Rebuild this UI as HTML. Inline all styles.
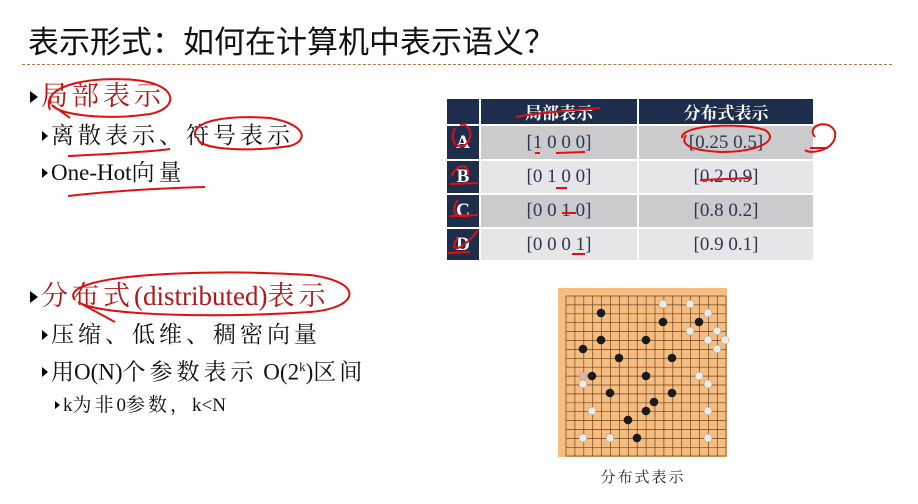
<!DOCTYPE html>
<html><head><meta charset="utf-8"><style>
body{margin:0;width:918px;height:504px;background:#fff;position:relative;overflow:hidden;font-family:"Liberation Serif","Noto Serif CJK SC",serif;}
.a{position:absolute;white-space:nowrap;line-height:1;}
.t{font-family:"Liberation Sans","Noto Sans CJK SC",sans-serif;font-size:31px;left:28px;top:27px;color:#111;}
.tri{display:inline-block;width:0;height:0;border-top:6px solid transparent;border-bottom:6px solid transparent;border-left:8px solid #000;margin-right:3px;vertical-align:middle;position:relative;top:-2px}
.tri.s{border-top-width:5px;border-bottom-width:5px;border-left-width:6px}
.l1{font-size:27px;color:#b01818}
.l2{font-size:23px;color:#111}
.l3{font-size:19px;color:#111}
.c7{letter-spacing:4px}.c6{letter-spacing:4px}.c4{letter-spacing:3px}
table{position:absolute;left:445px;top:97px;border-collapse:collapse;table-layout:fixed;width:368px;font-family:"Liberation Serif","Noto Serif CJK SC",serif;}
td{border:2px solid #fff;text-align:center;font-size:19px;color:#2a3550;padding:0}
th{background:#1f2d4d;color:#fff;font-size:17px;height:22px;border:2px solid #fff;font-weight:bold;padding:0}
td.h{background:#1f2d4d;color:#fff;font-weight:bold}
tr.g td{background:#cbcbcd}tr.w td{background:#e6e6e8}
tr td.h{background:#1f2d4d}
</style></head><body>
<div class="a t">表示形式：如何在计算机中表示语义？</div>
<div class="a" style="left:22px;top:64px;width:870px;border-top:1.5px dashed #b07a40"></div>

<div class="a l1" style="left:30px;top:83px"><span class="tri"></span><span class="c7">局部表示</span></div>
<div class="a l2" style="left:42px;top:124px"><span class="tri s"></span><span class="c6">离散表示、符号表示</span></div>
<div class="a l2" style="left:42px;top:161px"><span class="tri s"></span>One-Hot<span class="c6">向量</span></div>

<div class="a l1" style="left:30px;top:283px"><span class="tri"></span><span class="c7">分布式</span>(distributed)<span class="c7">表示</span></div>
<div class="a l2" style="left:42px;top:323px"><span class="tri s"></span><span class="c6">压缩、低维、稠密向量</span></div>
<div class="a l2" style="left:42px;top:360px"><span class="tri s"></span>用O(N)<span class="c6">个参数表示</span> O(2<sup style="font-size:13px">k</sup>)<span class="c4">区间</span></div>
<div class="a l3" style="left:55px;top:396px"><span class="tri s" style="border-left-width:5px;border-top-width:4px;border-bottom-width:4px"></span>k<span class="c4">为非</span>0<span class="c4">参数，</span>k&lt;N</div>

<table>
<colgroup><col style="width:34px"><col style="width:158px"><col style="width:176px"></colgroup>
<tr><th></th><th>局部表示</th><th>分布式表示</th></tr>
<tr class="g" style="height:35px"><td class="h">A</td><td>[1 0 0 0]</td><td>[0.25 0.5]</td></tr>
<tr class="w" style="height:34px"><td class="h">B</td><td>[0 1 0 0]</td><td>[0.2 0.9]</td></tr>
<tr class="g" style="height:34px"><td class="h">C</td><td>[0 0 1 0]</td><td>[0.8 0.2]</td></tr>
<tr class="w" style="height:33px"><td class="h">D</td><td>[0 0 0 1]</td><td>[0.9 0.1]</td></tr>
</table>

<svg class="a" style="left:0;top:0" width="918" height="504">
<rect x="558" y="288" width="169" height="169" fill="#f6bd82"/>
<g stroke="#6e4418" stroke-width="0.7">
<path d="M566 296V456M574.9 296V456M583.8 296V456M592.7 296V456M601.6 296V456M610.5 296V456M619.4 296V456M628.3 296V456M637.2 296V456M646.1 296V456M655 296V456M663.9 296V456M672.8 296V456M681.7 296V456M690.6 296V456M699.5 296V456M708.4 296V456M717.3 296V456M726 296V456"/>
<path d="M566 296H726M566 304.9H726M566 313.8H726M566 322.7H726M566 331.6H726M566 340.5H726M566 349.4H726M566 358.3H726M566 367.2H726M566 376.1H726M566 385H726M566 393.9H726M566 402.8H726M566 411.7H726M566 420.6H726M566 429.5H726M566 438.4H726M566 447.3H726M566 456H726"/>
</g>
<g fill="#1a1a1a">
<circle cx="601" cy="313" r="4.3"/><circle cx="663" cy="322" r="4.3"/><circle cx="699" cy="322" r="4.3"/>
<circle cx="601" cy="340" r="4.3"/><circle cx="646" cy="340" r="4.3"/><circle cx="583" cy="349" r="4.3"/>
<circle cx="619" cy="358" r="4.3"/><circle cx="672" cy="358" r="4.3"/><circle cx="592" cy="376" r="4.3"/>
<circle cx="646" cy="376" r="4.3"/><circle cx="610" cy="393" r="4.3"/><circle cx="672" cy="393" r="4.3"/>
<circle cx="654" cy="402" r="4.3"/><circle cx="646" cy="411" r="4.3"/><circle cx="628" cy="420" r="4.3"/><circle cx="637" cy="438" r="4.3"/>
</g>
<g fill="#eeeae4" stroke="#999" stroke-width="0.5">
<circle cx="663" cy="304" r="4"/><circle cx="690" cy="304" r="4"/><circle cx="708" cy="313" r="4"/>
<circle cx="690" cy="331" r="4"/><circle cx="717" cy="331" r="4"/><circle cx="708" cy="340" r="4"/><circle cx="725" cy="340" r="4"/>
<circle cx="717" cy="349" r="4"/><circle cx="699" cy="376" r="4"/><circle cx="583" cy="384" r="4"/>
<circle cx="708" cy="384" r="4"/><circle cx="592" cy="411" r="4"/><circle cx="708" cy="411" r="4"/>
<circle cx="583" cy="438" r="4"/><circle cx="610" cy="438" r="4"/><circle cx="708" cy="438" r="4"/>
<circle cx="583" cy="376" r="4" fill="#e8b0a8"/>
</g>
<text x="643" y="482" font-size="15" text-anchor="middle" fill="#222" font-family="Liberation Serif,Noto Serif CJK SC,serif" letter-spacing="2">分布式表示</text>

<g fill="none" stroke="#e01010" stroke-width="2">
<path d="M50 110 C40 85 90 76 135 80 C178 84 180 108 150 114 C110 120 60 116 52 105 L70 118"/>
<path d="M196 138 C188 120 230 115 270 118 C305 124 310 140 290 146 C250 152 205 150 198 140"/>
<path d="M68 156 C110 154 150 152 170 149"/>
<path d="M68 196 C120 190 170 188 205 187"/>
<path d="M75 300 C55 275 200 268 310 275 C365 282 360 308 310 312 C220 318 100 316 78 302 L115 322"/>
<path d="M682 138 C680 125 740 122 765 130 C780 140 760 152 720 152 C690 150 680 145 686 135"/>
<path d="M815 137 C805 125 830 118 835 132 C838 150 810 155 805 150 M810 148 L828 148"/>
<path d="M455 128 C450 140 455 150 465 145 C475 138 470 122 460 125"/>
<path d="M452 176 C455 165 470 162 468 175 M450 184 L478 183"/>
<path d="M458 200 C450 210 455 220 470 215 M450 216 L478 215"/>
<path d="M458 238 C448 250 458 256 478 230 M448 253 L470 252"/>
<path d="M535 153 L540 153 M556 153 L585 152"/>
<path d="M700 180 L752 178"/>
<path d="M562 213 L576 213 M572 254 L585 254"/>
<path d="M556 188 L567 188"/>
<path d="M516 117 C540 112 580 110 600 108"/>
</g>
</svg>
</body></html>
